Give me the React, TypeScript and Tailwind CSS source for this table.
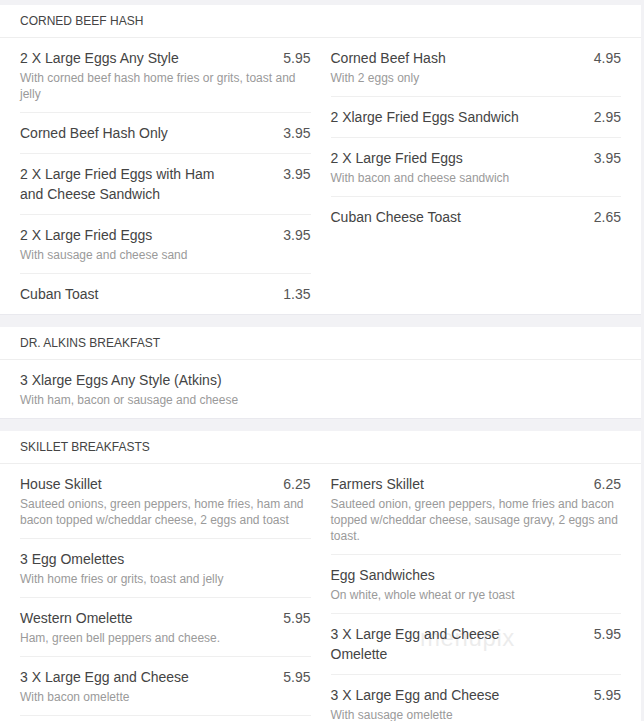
import React from 'react';

type Item = { name: string; price?: string; desc?: string };

type Section = { title: string; left: Item[]; right: Item[] };

const sections: Section[] = [
  {
    title: 'Corned Beef Hash',
    left: [
      { name: '2 X Large Eggs Any Style', price: '5.95', desc: 'With corned beef hash home fries or grits, toast and jelly' },
      { name: 'Corned Beef Hash Only', price: '3.95' },
      { name: '2 X Large Fried Eggs with Ham and Cheese Sandwich', price: '3.95' },
      { name: '2 X Large Fried Eggs', price: '3.95', desc: 'With sausage and cheese sand' },
      { name: 'Cuban Toast', price: '1.35' },
    ],
    right: [
      { name: 'Corned Beef Hash', price: '4.95', desc: 'With 2 eggs only' },
      { name: '2 Xlarge Fried Eggs Sandwich', price: '2.95' },
      { name: '2 X Large Fried Eggs', price: '3.95', desc: 'With bacon and cheese sandwich' },
      { name: 'Cuban Cheese Toast', price: '2.65' },
    ],
  },
  {
    title: 'Dr. Alkins Breakfast',
    left: [{ name: '3 Xlarge Eggs Any Style (Atkins)', desc: 'With ham, bacon or sausage and cheese' }],
    right: [],
  },
  {
    title: 'Skillet Breakfasts',
    left: [
      { name: 'House Skillet', price: '6.25', desc: 'Sauteed onions, green peppers, home fries, ham and bacon topped w/cheddar cheese, 2 eggs and toast' },
      { name: '3 Egg Omelettes', desc: 'With home fries or grits, toast and jelly' },
      { name: 'Western Omelette', price: '5.95', desc: 'Ham, green bell peppers and cheese.' },
      { name: '3 X Large Egg and Cheese', price: '5.95', desc: 'With bacon omelette' },
      { name: '3 X Large Egg and Cheese', price: '5.95', desc: 'With ham omelette' },
    ],
    right: [
      { name: 'Farmers Skillet', price: '6.25', desc: 'Sauteed onion, green peppers, home fries and bacon topped w/cheddar cheese, sausage gravy, 2 eggs and toast.' },
      { name: 'Egg Sandwiches', desc: 'On white, whole wheat or rye toast' },
      { name: '3 X Large Egg and Cheese Omelette', price: '5.95' },
      { name: '3 X Large Egg and Cheese', price: '5.95', desc: 'With sausage omelette' },
    ],
  },
];

function MenuItem({ item }: { item: Item }) {
  return (
    <div className="py-[10px]">
      <div className="flex justify-between">
        <span className="max-w-[70%] text-[14px] leading-[20px] text-[#444]">{item.name}</span>
        {item.price && <span className="text-[14px] leading-[20px] text-[#555]">{item.price}</span>}
      </div>
      {item.desc && <p className="mt-[2px] text-[12px] leading-[16px] text-[#9a9a9a]">{item.desc}</p>}
    </div>
  );
}

function MenuColumn({ items }: { items: Item[] }) {
  return (
    <div className="flex flex-col divide-y divide-[#efefef]">
      {items.map((item, i) => (
        <MenuItem key={i} item={item} />
      ))}
    </div>
  );
}

export default function App() {
  return (
    <div className="min-h-screen bg-[#f2f2f5] pt-[5px] font-['Liberation_Sans',Arial,sans-serif]">
      <div className="relative w-[641px] space-y-3">
        {sections.map((s) => (
          <div key={s.title} className="bg-white border-b border-[#e9e9ee]">
            <div className="h-[33px] border-b border-[#eeeeee] px-5 flex items-center">
              <h2 className="text-[12px] uppercase text-[#444]">{s.title}</h2>
            </div>
            <div className="grid grid-cols-2 gap-x-5 px-5">
              <MenuColumn items={s.left} />
              <MenuColumn items={s.right} />
            </div>
          </div>
        ))}
        {/* watermark */}
        <span className="absolute left-[420px] top-[615px] text-[24px] text-[#000] opacity-[0.07] tracking-wide">
          menupix
        </span>
      </div>
    </div>
  );
}
